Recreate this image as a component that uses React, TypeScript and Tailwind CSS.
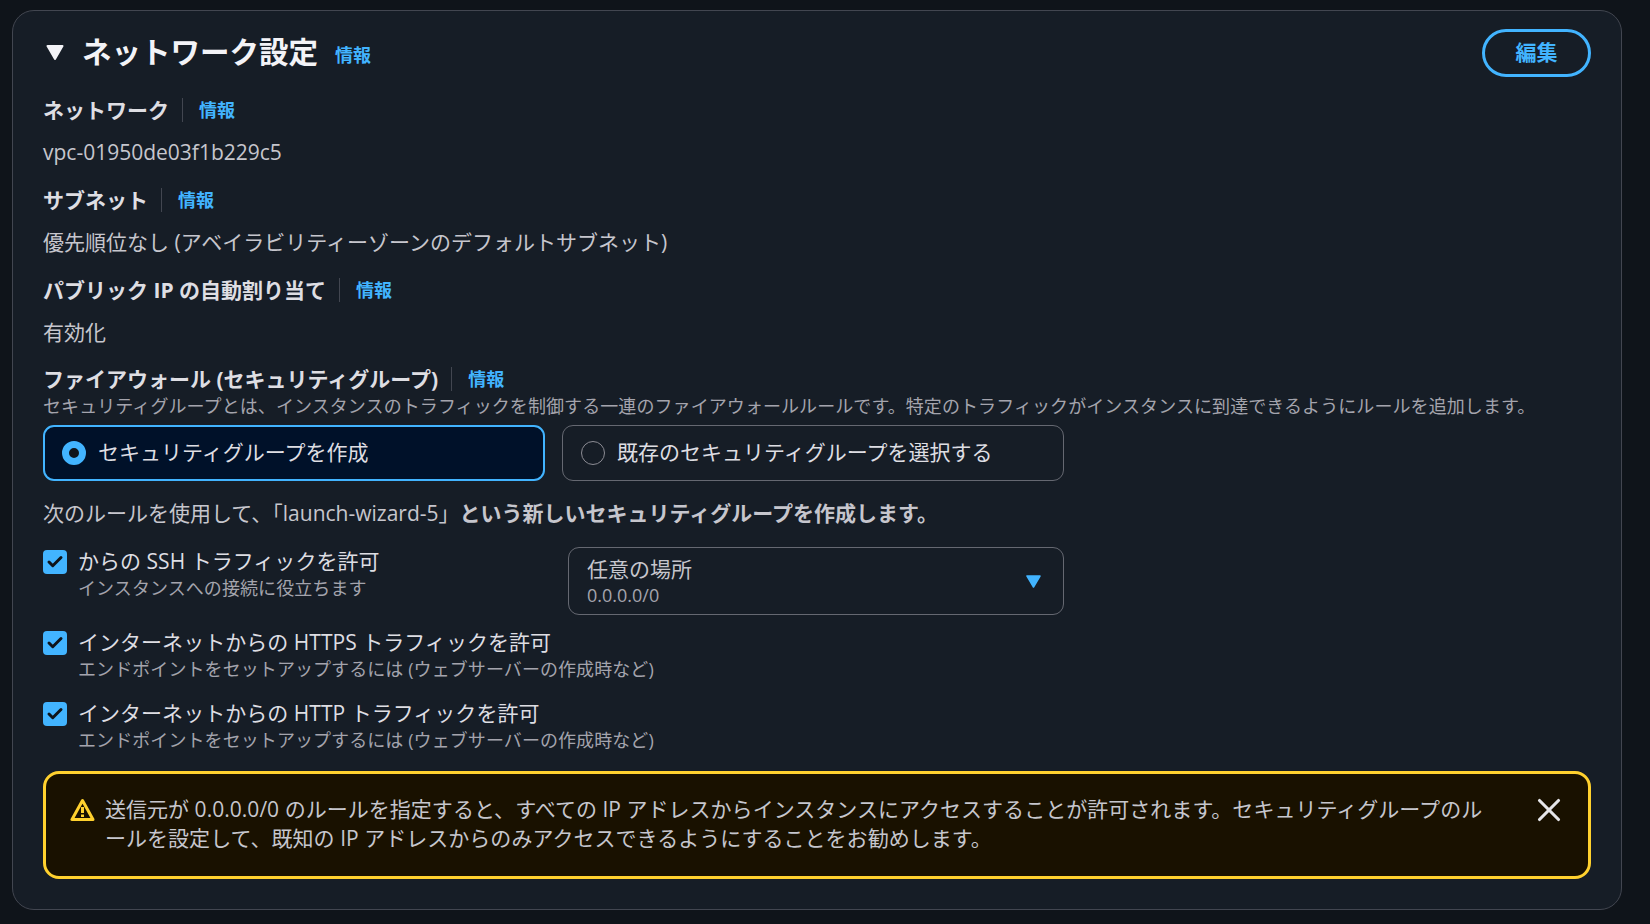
import { Check, X } from "lucide-react";

const fontStack = "font-['Open_Sans','Noto_Sans_CJK_JP',sans-serif]";

function InfoLink({ className = "" }: { className?: string }) {
  return <a className={`text-[18px] leading-[24px] font-bold text-[#42b4ff] ${className}`}>情報</a>;
}

function FieldLabel({ label }: { label: string }) {
  return (
    <div className="flex h-[24px] items-center">
      <span className="text-[21px] leading-[24px] font-bold text-[#dedee3]">{label}</span>
      <span className="mx-[13px] h-[24px] w-px bg-[#424650]" />
      <InfoLink className="ml-[3px]" />
    </div>
  );
}

function ValueField({ label, value }: { label: string; value: string }) {
  return (
    <div className="h-[90px]">
      <FieldLabel label={label} />
      <div className="mt-[16px] text-[21px] leading-[28px] text-[#c6c6cd]">{value}</div>
    </div>
  );
}

function TileRadio({ label, selected }: { label: string; selected?: boolean }) {
  return (
    <div
      className={
        selected
          ? "flex h-[56px] w-[502px] items-center rounded-[11px] border-2 border-[#42b4ff] bg-[#001129] pl-[17px]"
          : "flex h-[56px] w-[502px] items-center rounded-[11px] border border-[#656871] pl-[18px]"
      }
    >
      {selected ? (
        <span className="flex h-[24px] w-[24px] items-center justify-center rounded-full border-[7px] border-[#42b4ff] bg-[#0f141a]" />
      ) : (
        <span className="h-[24px] w-[24px] rounded-full border border-[#8c8c94]" />
      )}
      <span className="mb-[2px] ml-[12px] text-[21px] leading-[28px] text-[#dedee3]">{label}</span>
    </div>
  );
}

function RuleCheckbox({ label, hint }: { label: string; hint: string }) {
  return (
    <div className="flex">
      <span className="mt-[3px] flex h-[24px] w-[24px] shrink-0 items-center justify-center rounded-[4px] bg-[#42b4ff]">
        <Check className="h-[18px] w-[18px] text-[#0f141a]" strokeWidth={4} />
      </span>
      <div className="ml-[11px]">
        <div className="text-[21px] leading-[28px] tracking-[0.03px] text-[#dedee3]">{label}</div>
        <div className="mt-[1px] text-[18px] leading-[24px] tracking-[0.08px] text-[#a4a4ad]">{hint}</div>
      </div>
    </div>
  );
}

export default function App() {
  return (
    <div className={`h-[924px] w-[1650px] overflow-hidden bg-[#0f141a] px-[12px] pt-[10px] ${fontStack}`}>
      <div className="h-[900px] w-[1610px] rounded-[22px] border border-[#424650] bg-[#161d26] pl-[30px] pr-[30px]">
        {/* header */}
        <div className="flex h-[80px] items-center justify-between pt-[1px]">
          <div className="flex items-center">
            <svg className="ml-[3px] mt-[2px] h-[15px] w-[18px]" viewBox="0 0 18 15">
              <path d="M1.5 1h15L9 14z" fill="#f3f3f7" stroke="#f3f3f7" strokeWidth="2" strokeLinejoin="round" />
            </svg>
            <h2 className="ml-[18px] text-[29.5px] leading-[40px] font-bold text-[#f3f3f7]">ネットワーク設定</h2>
            <InfoLink className="mt-[7px] ml-[17px]" />
          </div>
          <button className="mt-[2px] h-[48px] w-[109px] rounded-full border-[3px] border-[#42b4ff] text-[21px] font-bold text-[#42b4ff]">
            編集
          </button>
        </div>

        <div className="pt-[7px]">
          <ValueField label="ネットワーク" value="vpc-01950de03f1b229c5" />
          <ValueField label="サブネット" value="優先順位なし (アベイラビリティーゾーンのデフォルトサブネット)" />
          <ValueField label="パブリック IP の自動割り当て" value="有効化" />
        </div>

        <div className="mt-[-1px]">
          <FieldLabel label="ファイアウォール (セキュリティグループ)" />
        </div>
        <p className="mt-[3px] text-[18px] leading-[24px] tracking-[0.08px] text-[#a4a4ad]">
          セキュリティグループとは、インスタンスのトラフィックを制御する一連のファイアウォールルールです。特定のトラフィックがインスタンスに到達できるようにルールを追加します。
        </p>

        <div className="mt-[7px] flex gap-[17px]">
          <TileRadio label="セキュリティグループを作成" selected />
          <TileRadio label="既存のセキュリティグループを選択する" />
        </div>

        <p className="mt-[18px] text-[21px] leading-[28px] text-[#c6c6cd]">
          次のルールを使用して、「launch-wizard-5」<b className="font-bold">という新しいセキュリティグループを作成します。</b>
        </p>

        <div className="mt-[20px] flex h-[68px] w-[1021px] justify-between">
          <RuleCheckbox label="からの SSH トラフィックを許可" hint="インスタンスへの接続に役立ちます" />
          <div className="flex h-[68px] w-[496px] items-center justify-between rounded-[11px] border border-[#656871] pl-[18px] pr-[22px]">
            <div className="mt-[-1px]">
              <div className="text-[21px] leading-[28px] text-[#c6c6cd]">任意の場所</div>
              <div className="text-[18px] leading-[24px] text-[#a4a4ad]">0.0.0.0/0</div>
            </div>
            <svg className="h-[13px] w-[15px]" viewBox="0 0 15 13">
              <path d="M1 1h13L7.5 12z" fill="#42b4ff" stroke="#42b4ff" strokeWidth="1.5" strokeLinejoin="round" />
            </svg>
          </div>
        </div>

        <div className="mt-[13px]">
          <RuleCheckbox label="インターネットからの HTTPS トラフィックを許可" hint="エンドポイントをセットアップするには (ウェブサーバーの作成時など)" />
        </div>
        <div className="mt-[18px]">
          <RuleCheckbox label="インターネットからの HTTP トラフィックを許可" hint="エンドポイントをセットアップするには (ウェブサーバーの作成時など)" />
        </div>

        {/* warning alert */}
        <div className="mt-[19px] flex h-[108px] w-[1548px] rounded-[16px] border-[3px] border-[#ffd12e] bg-[#191100] pl-[24px] pr-[20px] pt-[21px]">
          <svg className="mt-[3px] h-[24px] w-[25px] shrink-0" viewBox="0 0 25 24" fill="none">
            <path d="M12.5 2.5 2 21.5h21z" stroke="#ffd12e" strokeWidth="3" strokeLinejoin="round" />
            <path d="M12.5 9v6M12.5 16.5v2.6" stroke="#ffd12e" strokeWidth="3" />
          </svg>
          <p className="ml-[10px] w-[1384px] text-[21px] leading-[29px] tracking-[0.03px] text-[#c6c6cd]">
            送信元が 0.0.0.0/0 のルールを指定すると、すべての IP アドレスからインスタンスにアクセスすることが許可されます。セキュリティグループのルールを設定して、既知の IP アドレスからのみアクセスできるようにすることをお勧めします。
          </p>
          <X className="ml-auto mt-[-4px] h-[38px] w-[38px] shrink-0 text-[#e6e6ea]" strokeWidth={2} />
        </div>
      </div>
    </div>
  );
}
